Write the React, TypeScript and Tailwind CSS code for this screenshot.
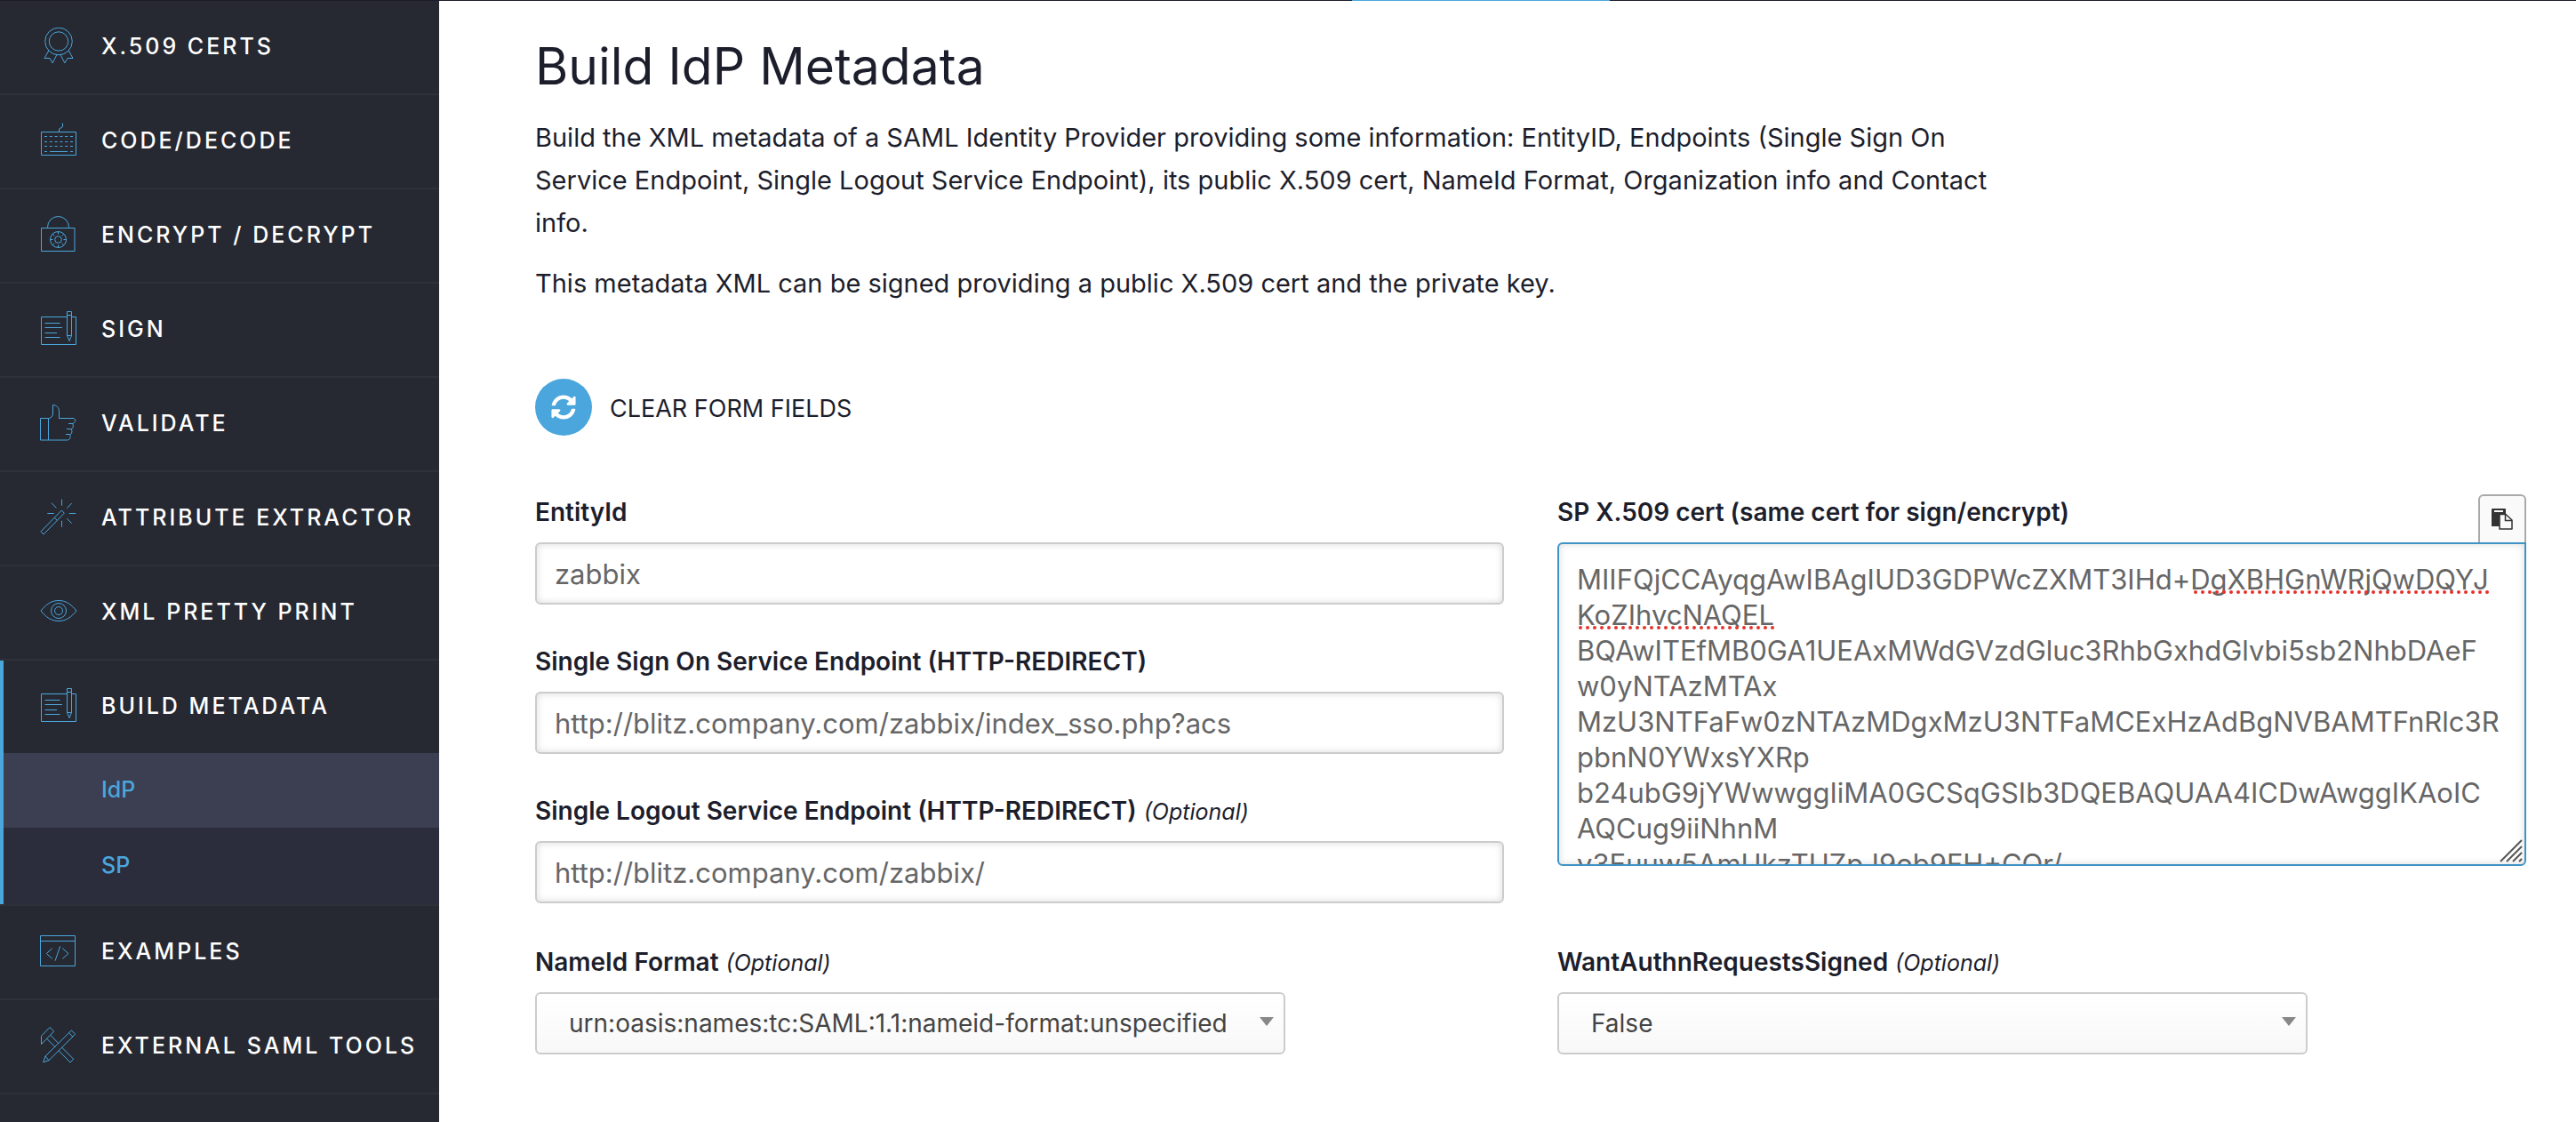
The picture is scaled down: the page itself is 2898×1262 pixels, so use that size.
import { useState } from "react";
import type { ReactNode } from "react";
import { FaSyncAlt } from "react-icons/fa";

const CERT = `MIIFQjCCAyqgAwIBAgIUD3GDPWcZXMT3IHd+DgXBHGnWRjQwDQYJ
KoZIhvcNAQEL
BQAwITEfMB0GA1UEAxMWdGVzdGluc3RhbGxhdGlvbi5sb2NhbDAeF
w0yNTAzMTAx
MzU3NTFaFw0zNTAzMDgxMzU3NTFaMCExHzAdBgNVBAMTFnRlc3R
pbnN0YWxsYXRp
b24ubG9jYWwwggIiMA0GCSqGSIb3DQEBAQUAA4ICDwAwggIKAoIC
AQCug9iiNhnM
y3Euuw5AmUkzTUZpJ9ob9FH+CQr/`;

function Icon({ children }: { children: ReactNode }) {
  return (
    <svg
      width={44}
      height={44}
      viewBox="0 0 44 44"
      fill="none"
      stroke="currentColor"
      aria-hidden="true"
      className="shrink-0 text-[#4aa6dc]"
    >
      {children}
    </svg>
  );
}

const certIcon = (
  <Icon>
    <circle cx="22" cy="15.5" r="15.3" />
    <circle cx="22" cy="15.5" r="10.7" />
    <path d="M10.7 26 6 34.5h6l3.2 5.3 4.6-9M33.3 26l4.7 8.5h-6l-3.2 5.3-4.6-9" />
  </Icon>
);

const keyboardIcon = (
  <Icon>
    <path d="M2.5 11.5h39v26h-39zM22.5 11.5V8l3.5-2 .5-1V1.5" />
    <path d="M6 16.5h33M6 22.5h33M6 27.5h33" strokeDasharray="3 2.8" />
    <path d="M6 33.5h3M12 33.5h20M35 33.5h3" />
  </Icon>
);

const lockIcon = (
  <Icon>
    <path d="M2.5 13.5H40v26H2.5zM9.5 13.5v-1a12 12 0 0 1 24 0v1" />
    <circle cx="21.5" cy="26.5" r="9" />
    <circle cx="21.5" cy="26.5" r="3.8" />
    <path d="M21.5 17.5v3M21.5 32.5v3M12.5 26.5h3M27.5 26.5h3M15.1 20.1l2.2 2.2M25.7 30.7l2.2 2.2M15.1 32.9l2.2-2.2M25.7 22.3l2.2-2.2" />
  </Icon>
);

const documentIcon = (
  <Icon>
    <path d="M31.5 7.5h-29v31h39v-31h-5" />
    <path d="M31.5 1.5h5v27l-2.5 6-2.5-6zM31.5 5.5h5M31.5 28.5h5" />
    <path d="M6.5 14.5h17M6.5 19.5H26M6.5 25.5H20M6.5 30.5h17" />
  </Icon>
);

const thumbIcon = (
  <Icon>
    <path d="M1.5 15.5h9V40h-9z" />
    <path d="M10.5 15.5c3 0 5-2.5 5-5.5V.5c4 0 7 3 7 7v8H38c3 0 3.5 3 1.5 5l-1.5 1h-5 4.5c1.5 1.5 1 5-.8 6H31h5.2c1.3 2 .8 5-.7 6H30h4.7c1 2.5.3 6.5-3 6.5H10.5" />
  </Icon>
);

const wandIcon = (
  <Icon>
    <path d="M25.3 13 2 36.8 5 40l23.3-23.8zM17.3 21.2l3.2 3.2" />
    <path d="M25.5.7v7M25.5 24.7v7M9.3 16.5h7.4M33.7 16.5h7.6M14 4.7l5.3 5.6M36.7 5l-5.4 5.6M31.3 22.3l5.4 5.4" />
  </Icon>
);

const eyeIcon = (
  <Icon>
    <path d="M2 20C8 12.5 14 8.5 22 8.5S36 12.5 42 20C36 27.5 30 31.5 22 31.5S8 27.5 2 20z" />
    <circle cx="22" cy="20" r="8.5" />
    <circle cx="22" cy="20" r="4.5" />
  </Icon>
);

const codeIcon = (
  <Icon>
    <path d="M1.5 3.5h39v34h-39zM1.5 9.5h39" />
    <path d="M14.7 17.7l-6.4 5.8 6.4 5.8M23.7 15.3 18 31.7M26.3 17.7l6.7 5.8-6.7 5.8" />
  </Icon>
);

const toolsIcon = (
  <Icon>
    <path d="M12 .5 16.7 5 2.5 19.5v-9.2zM12.7 9.2 22 18.8M8.7 13.3l9.5 9.5M25.5 23l13.2 13.3L35 40 22 26.7" />
    <path d="M4.7 39.7 7 33 36.3 4l4.4 4.2L11 37.7zM33.3 6.5l4.7 4.7M7 33l4 4.7" />
  </Icon>
);

function PasteIcon() {
  return (
    <svg width={24} height={24} viewBox="0 0 24 24" aria-hidden="true">
      <path d="M1 0h14a1 1 0 0 1 1 1v19H0V1a1 1 0 0 1 1-1z" fill="#333" />
      <path d="M3 2h10v2H3z" fill="#fafafa" />
      <path
        d="M9 6.500h7L23 13v10H9z"
        fill="#fafafa"
        stroke="#333"
        strokeWidth={1.5}
        strokeLinejoin="round"
      />
      <path d="M15.5 6.5v7H23" fill="none" stroke="#333" strokeWidth={1.5} />
    </svg>
  );
}

type MenuItem = {
  label: string;
  icon: ReactNode;
  children?: { label: string; current?: boolean }[];
};

const menu: MenuItem[] = [
  { label: "X.509 CERTS", icon: certIcon },
  { label: "CODE/DECODE", icon: keyboardIcon },
  { label: "ENCRYPT / DECRYPT", icon: lockIcon },
  { label: "SIGN", icon: documentIcon },
  { label: "VALIDATE", icon: thumbIcon },
  { label: "ATTRIBUTE EXTRACTOR", icon: wandIcon },
  { label: "XML PRETTY PRINT", icon: eyeIcon },
  {
    label: "BUILD METADATA",
    icon: documentIcon,
    children: [{ label: "IdP", current: true }, { label: "SP" }],
  },
  { label: "EXAMPLES", icon: codeIcon },
  { label: "EXTERNAL SAML TOOLS", icon: toolsIcon },
];

function Sidebar() {
  return (
    <nav className="w-[494px] shrink-0 bg-[#262932] text-[25px] font-medium">
      <ul>
        {menu.map((item) => (
          <li key={item.label} className="border-b-2 border-[#2e3139]">
            <div
              className={
                item.children
                  ? "border-l-4 border-[#4aa6dc]"
                  : "border-l-4 border-transparent"
              }
            >
              <a
                href="#"
                className="flex h-[104px] items-center gap-[26px] pl-10 tracking-[3px] whitespace-nowrap text-white"
              >
                {item.icon}
                {item.label}
              </a>
              {item.children && (
                <ul>
                  {item.children.map((sub) => (
                    <li key={sub.label}>
                      <a
                        href="#"
                        className={
                          sub.current
                            ? "flex h-[84px] items-center bg-[#3c3e51] pl-[110px] text-[#4aa6dc]"
                            : "flex h-[86px] items-center bg-[#2b2d3c] pl-[110px] text-[#4aa6dc]"
                        }
                      >
                        {sub.label}
                      </a>
                    </li>
                  ))}
                </ul>
              )}
            </div>
          </li>
        ))}
      </ul>
    </nav>
  );
}

type FieldProps = {
  id: string;
  label: string;
  optional?: boolean;
  children: ReactNode;
};

function Field({ id, label, optional, children }: FieldProps) {
  return (
    <div className="flex flex-col gap-[14px]">
      <label htmlFor={id} className="text-[28px] leading-10 font-semibold">
        {label}
        {optional && (
          <em className="ml-2 text-[25px] leading-none font-normal">
            (Optional)
          </em>
        )}
      </label>
      {children}
    </div>
  );
}

type TextFieldProps = {
  id: string;
  label: string;
  optional?: boolean;
  value: string;
  onChange: (value: string) => void;
};

function TextField({ id, label, optional, value, onChange }: TextFieldProps) {
  return (
    <Field id={id} label={label} optional={optional}>
      <input
        id={id}
        type="text"
        value={value}
        onChange={(e) => onChange(e.target.value)}
        className="h-[70px] w-full rounded-md border-2 border-[#ccc] bg-white px-5
                   text-[31px] text-[#666] shadow-[inset_0_0_8px_rgba(0,0,0,0.15)] outline-none"
      />
    </Field>
  );
}

type SelectFieldProps = {
  id: string;
  label: string;
  options: string[];
};

function SelectField({ id, label, options }: SelectFieldProps) {
  return (
    <Field id={id} label={label} optional>
      <div className="relative max-w-[844px]">
        <select
          id={id}
          className="h-[70px] w-full appearance-none rounded-md border-2 border-[#ccc]
                     bg-linear-to-b from-white to-[#f8f8f8] pr-12 pl-9 text-[28px] text-[#444] outline-none"
        >
          {options.map((option) => (
            <option key={option}>{option}</option>
          ))}
        </select>
        <svg
          width={16}
          height={10}
          viewBox="0 0 16 10"
          aria-hidden="true"
          className="pointer-events-none absolute top-7 right-[13px] fill-[#888]"
        >
          <path d="M0 0h16L8 10z" />
        </svg>
      </div>
    </Field>
  );
}

function SpellingDots({ width }: { width: number }) {
  return (
    <svg width={width} height={4} aria-hidden="true">
      <path
        d={`M2 2H${width}`}
        stroke="#e8302a"
        strokeWidth={4}
        strokeLinecap="round"
        strokeDasharray="0 8"
      />
    </svg>
  );
}

export default function App() {
  const [entityId, setEntityId] = useState("zabbix");
  const [sso, setSso] = useState(
    "http://blitz.company.com/zabbix/index_sso.php?acs"
  );
  const [slo, setSlo] = useState("http://blitz.company.com/zabbix/");
  const [cert, setCert] = useState(CERT);

  const clearForm = () => {
    setEntityId("");
    setSso("");
    setSlo("");
    setCert("");
  };

  return (
    <div className="flex min-h-screen flex-col bg-white font-['Inter',sans-serif] text-[#1d1e2c]">
      {/* Bottom edge of the site header, with the active tab marker */}
      <header className="flex h-px bg-[#1d1b2a] pl-[1521px]">
        <span className="w-[290px] bg-[#4aa6dc]" />
      </header>

      <div className="flex flex-1">
        <Sidebar />

        <main className="min-w-0 flex-1 pt-[42px] pr-14 pb-14 pl-[108px]">
          <h1 className="text-[57px] leading-[64px]">Build IdP Metadata</h1>
          <div className="mt-6 flex max-w-[1660px] flex-col gap-5 text-[29px] leading-[48px]">
            <p>
              Build the XML metadata of a SAML Identity Provider providing some
              information: EntityID, Endpoints (Single Sign On Service Endpoint,
              Single Logout Service Endpoint), its public X.509 cert, NameId
              Format, Organization info and Contact info.
            </p>
            <p>
              This metadata XML can be signed providing a public X.509 cert and
              the private key.
            </p>
          </div>

          <button
            type="button"
            onClick={clearForm}
            className="mt-[83px] flex items-center gap-5 text-[27px]"
          >
            <span className="flex size-16 items-center justify-center rounded-full bg-[#4aa6dc]">
              <FaSyncAlt size={28} className="text-white" />
            </span>
            <span className="pt-1">CLEAR FORM FIELDS</span>
          </button>

          <form className="mt-[66px] grid grid-cols-2 gap-x-[60px] gap-y-[46px]">
            <div className="flex flex-col gap-11">
              <TextField
                id="entity-id"
                label="EntityId"
                value={entityId}
                onChange={setEntityId}
              />
              <TextField
                id="sso"
                label="Single Sign On Service Endpoint (HTTP-REDIRECT)"
                value={sso}
                onChange={setSso}
              />
              <TextField
                id="slo"
                label="Single Logout Service Endpoint (HTTP-REDIRECT)"
                optional
                value={slo}
                onChange={setSlo}
              />
            </div>

            <div className="relative">
              <Field id="cert" label="SP X.509 cert (same cert for sign/encrypt)">
                <div className="relative">
                  <textarea
                    id="cert"
                    value={cert}
                    spellCheck={false}
                    onChange={(e) => setCert(e.target.value)}
                    className="block h-[364px] w-full resize-none overflow-hidden rounded-md rounded-tr-none border-2
                               border-[#3f93c6] bg-white px-5 pt-5 text-[31px] leading-10 whitespace-pre
                               text-[#666] shadow-[inset_0_0_8px_rgba(0,0,0,0.15)] outline-none"
                  />
                  {cert === CERT && (
                    <>
                      <span className="absolute top-[54px] left-[716px] leading-none">
                        <SpellingDots width={332} />
                      </span>
                      <span className="absolute top-[94px] left-6 leading-none">
                        <SpellingDots width={222} />
                      </span>
                    </>
                  )}
                  <svg
                    width={26}
                    height={26}
                    viewBox="0 0 26 26"
                    aria-hidden="true"
                    className="pointer-events-none absolute right-1 bottom-1"
                  >
                    <path
                      d="M1 25 25 1M8 25 25 8M15 25l10-10M22 25l3-3"
                      stroke="#555"
                      strokeWidth={2}
                    />
                  </svg>
                </div>
              </Field>
              <button
                type="button"
                aria-label="Copy"
                className="absolute top-0 right-0 flex h-[54px] w-[54px] items-center justify-center
                           rounded-t-md border-2 border-b-0 border-[#aaa] bg-[#fafafa]"
              >
                <PasteIcon />
              </button>
            </div>

            <SelectField
              id="nameid-format"
              label="NameId Format"
              options={[
                "urn:oasis:names:tc:SAML:1.1:nameid-format:unspecified",
                "urn:oasis:names:tc:SAML:1.1:nameid-format:emailAddress",
              ]}
            />
            <SelectField
              id="authn-signed"
              label="WantAuthnRequestsSigned"
              options={["False", "True"]}
            />
          </form>
        </main>
      </div>
    </div>
  );
}
